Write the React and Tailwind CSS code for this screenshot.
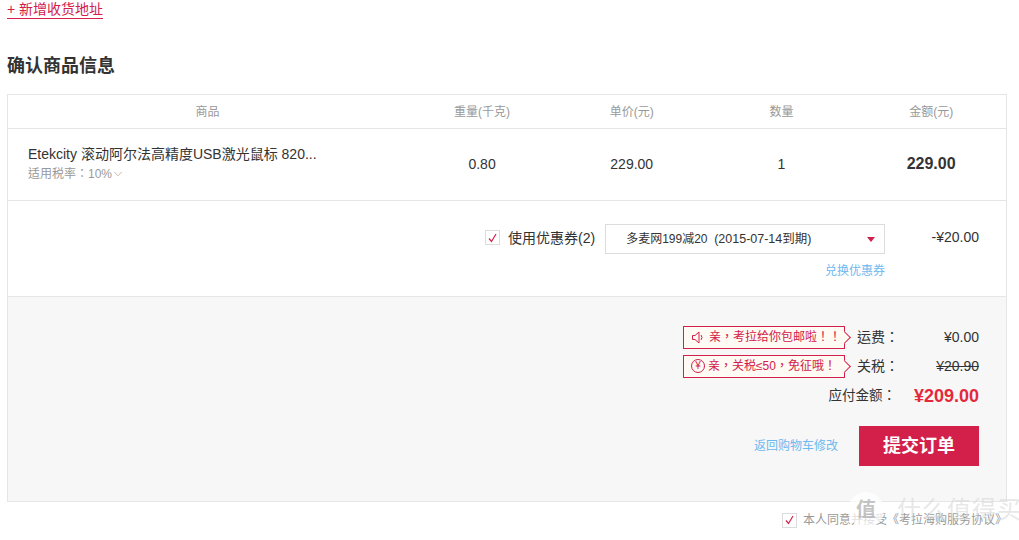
import React from 'react'
import { ChevronDown } from 'lucide-react'

const FONT = "font-['Liberation_Sans','Noto_Sans_CJK_SC',sans-serif]"
// the centred punctuation in the notices and labels comes from the TC cut
const FONT_TC = "font-['Liberation_Sans','Noto_Sans_CJK_TC',sans-serif]"

const Tick = () => (
  <span className="flex h-[15px] w-[15px] shrink-0 items-center justify-center border border-[#dcdcdc] bg-white">
    <svg width="9" height="10" viewBox="0 0 9 10" fill="none">
      <path d="M1 5.5 L3.5 8.5 L8 1" stroke="#d6204a" strokeWidth="1.2" />
    </svg>
  </span>
)

const Notice = ({ icon, children }) => (
  <div className={`relative mt-[1px] mr-[12px] flex h-[23px] w-[162px] items-center border border-[#d2204a] bg-[#fffaf3] pl-[7px] text-xs text-[#d2204a] ${FONT_TC}`}>
    {icon}
    <span className="ml-[3px] whitespace-nowrap">{children}</span>
    <span className="absolute -right-[5px] top-[6px] h-[9px] w-[9px] rotate-45 border-t border-r border-[#d2204a] bg-[#fffaf3]" />
  </div>
)

const App = () => {
  return (
    <div className={`relative h-[540px] w-[1019px] overflow-hidden bg-white px-[7px] text-[#333] ${FONT}`}>
      <div className="h-[18px] -translate-y-[3px]">
        <a className="inline-block border-b border-[#d2204a] text-sm leading-[18px] text-[#d2204a]">+ 新增收货地址</a>
      </div>
      <h2 className="mt-[36px] text-lg leading-6 font-bold text-[#333]">确认商品信息</h2>

      <div className="mt-[16px] h-[408px] w-[1000px] border border-[#e6e6e6]">
        {/* header */}
        <div className="flex h-[34px] items-center border-b border-[#e6e6e6] text-xs text-[#999]">
          <div className="w-[400px] text-center">商品</div>
          <div className="w-[150px] text-center">重量(千克)</div>
          <div className="w-[150px] text-center">单价(元)</div>
          <div className="w-[150px] text-center">数量</div>
          <div className="w-[150px] text-center">金额(元)</div>
        </div>

        {/* product row */}
        <div className="flex h-[72px] items-center border-b border-[#e6e6e6] pb-[2px] text-sm">
          <div className="w-[400px] pl-5">
            <div className="text-sm leading-[18px] whitespace-nowrap">Etekcity 滚动阿尔法高精度USB激光鼠标 820...</div>
            <div className={`mt-[3px] flex items-center text-xs leading-4 text-[#999] ${FONT_TC}`}>
              适用税率：10%
              <ChevronDown size={14} strokeWidth={1} className="-ml-px text-[#a8876f]" />
            </div>
          </div>
          <div className="w-[150px] text-center">0.80</div>
          <div className="w-[150px] text-center">229.00</div>
          <div className="w-[150px] text-center">1</div>
          <div className="w-[150px] text-center text-base font-bold">229.00</div>
        </div>

        {/* coupon */}
        <div className="h-[96px] border-b border-[#e6e6e6] pt-[23px]">
          <div className="flex items-start">
            <div className="ml-[477px] flex h-[27px] items-center">
              <Tick />
              <span className="ml-2 text-sm whitespace-nowrap">使用优惠券(2)</span>
            </div>
            <div className="ml-[10px] flex h-[30px] w-[280px] items-center justify-between border border-[#dcdcdc] pr-[9px] pl-5 text-xs">
              <span>多麦网199减20&nbsp;&nbsp;<span className="text-[12.5px]">(2015-07-14到期)</span></span>
              <span className="mt-[1px] h-0 w-0 border-x-[4px] border-t-[5px] border-x-transparent border-t-[#d2204a]" />
            </div>
            <div className="flex h-[26px] flex-1 items-center justify-end pr-[27px] text-sm">-¥20.00</div>
          </div>
          <div className="mt-[9px] pr-[121px] text-right text-xs leading-4 text-[#6db9f0]">兑换优惠券</div>
        </div>

        {/* summary */}
        <div className="h-[204px] bg-[#f7f7f7] pt-[28px] pr-[27px]">
          <div className="flex h-[23px] items-center justify-end">
            <Notice icon={
              <svg width="15" height="15" viewBox="0 0 15 15" fill="none" stroke="#d2204a" strokeWidth="1">
                <path d="M1.5 5.5 H4 L8 2 V13 L4 9.5 H1.5 Z" />
                <path d="M10 5 Q12 7.5 10 10" />
              </svg>
            }>亲，考拉给你包邮啦！！</Notice>
            <span className={`w-[43px] text-sm whitespace-nowrap ${FONT_TC}`}>运费：</span>
            <span className="w-[79px] text-right text-sm">¥0.00</span>
          </div>
          <div className="mt-[6px] flex h-[23px] items-center justify-end">
            <Notice icon={
              <span className="flex h-[14px] w-[14px] items-center justify-center rounded-full border border-[#d2204a] text-[10px] leading-none">¥</span>
            }>亲，关税≤50，免征哦！</Notice>
            <span className={`w-[43px] text-sm whitespace-nowrap ${FONT_TC}`}>关税：</span>
            <span className="w-[79px] text-right text-sm line-through">¥20.90</span>
          </div>
          <div className="mt-[7px] flex h-6 items-center justify-end">
            <span className={`text-[13.5px] ${FONT_TC}`}>应付金额：</span>
            <span className="w-[83px] text-right text-lg font-bold text-[#e4293c]">¥209.00</span>
          </div>
          <div className="mt-[18px] flex items-center justify-end">
            <a className="mr-[21px] text-xs text-[#6db9f0]">返回购物车修改</a>
            <button className="h-10 w-[120px] bg-[#d2204a] text-lg font-bold text-white">提交订单</button>
          </div>
        </div>
      </div>

      {/* agreement */}
      <div className="mt-[10px] flex items-center pl-[775px] text-xs text-[#999]">
        <Tick />
        <span className="ml-[6px] whitespace-nowrap">本人同意并接受《考拉海购服务协议》</span>
      </div>

      {/* watermark */}
      <div className="absolute top-[492px] left-[848px] flex items-center">
        <span className="flex h-[36px] w-[36px] items-center justify-center rounded-full bg-white/70 text-xl font-bold text-[#aaa]/70">值</span>
        <span className="ml-[13px] text-2xl leading-8 tracking-[1px] whitespace-nowrap text-[#d8d8d8]/60">什么值得买</span>
      </div>
    </div>
  )
}

export default App
